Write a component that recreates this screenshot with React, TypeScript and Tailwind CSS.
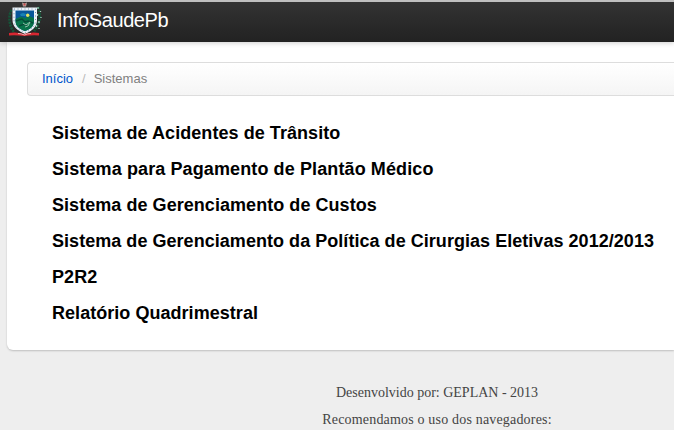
const systems = [
  { name: "Sistema de Acidentes de Trânsito", tracking: "tracking-[0.06px]" },
  { name: "Sistema para Pagamento de Plantão Médico", tracking: "tracking-[0.11px]" },
  { name: "Sistema de Gerenciamento de Custos", tracking: "tracking-[0.05px]" },
  { name: "Sistema de Gerenciamento da Política de Cirurgias Eletivas 2012/2013", tracking: "tracking-[0.04px]" },
  { name: "P2R2", tracking: "tracking-[0.06px]" },
  { name: "Relatório Quadrimestral", tracking: "tracking-[0.04px]" },
];

function Crest() {
  return (
    <svg width="34" height="36" viewBox="0 0 34 36" aria-hidden="true">
      <g fill="none" stroke="#14573a" strokeDasharray="2 1">
        <path d="M3.500 8C0 14 1 24 6 30" strokeWidth="2.500" />
        <path d="M30 5C33 13 32 22 26 29" strokeWidth="3" />
      </g>
      <path d="M30 5v2M32.500 9v1M29.500 12v2M33 15v1M31 19v2M28.500 23v2M31 26v1" stroke="#a5cdbb" strokeWidth="1.300" />
      <path d="M4.500 5.500H29V18c0 7-5 11-12 14C10 29 4.500 25 4.500 18Z" fill="#edf3f8" />
      <path d="M6 7h21.500v11c0 6-4 10-10.500 12.500C10.500 28 6 24.500 6 18Z" fill="none" stroke="#7799b2" strokeWidth="1" strokeDasharray="1 2.500" />
      <path d="M7.500 8.500h18.500v10c0 5.500-3 8.500-9 10.500-6-2-9.500-5-9.500-10.500Z" fill="#07579a" />
      <path d="M12 12l3-1 3 1-1 2h-4Z" fill="#1682b4" />
      <path d="M7.500 17l5.500-2.500 4 1.500 4-2 5 2v3c0 5-3 8-9 10-6-2-9.500-5-9.500-10Z" fill="#08734a" />
      <path d="M8 19l6-2 3 3 3-1 5 2M11 24l5-2 4 3" fill="none" stroke="#064b38" strokeWidth="1.500" />
      <path d="M15 21l3 2 4-3-2 4-3 1" fill="none" stroke="#8cc2a7" strokeWidth="1" />
      <circle cx="19.700" cy="13.200" r="1.700" fill="#e5e45d" />
      <path d="M14 0.500l2.500 1 2.500-1-1 4h-3Z" fill="#b9a6a2" />
      <path d="M15.500 1.500h2v2h-2Z" fill="#c94848" />
      <path d="M1 31q7-1.500 15 1 8-2.500 15-1v2.500q-7-.5-14.500.5-8-1-15.500-.5Z" fill="#d72731" />
      <path d="M10 31.500q3 0 6.500 1.500 3-1.500 6.500-1.500" fill="none" stroke="#edaaab" strokeWidth="1" />
    </svg>
  );
}

export default function App() {
  return (
    <div className="flex h-[430px] w-[674px] flex-col overflow-hidden bg-[#eeeeee] font-['Liberation_Sans',Arial,sans-serif]">
      <header className="z-10 flex h-[42px] shrink-0 items-start border-t-2 border-t-[#bfbfbf] bg-linear-to-b from-[#333333] to-[#222222] pl-2 shadow-[0_1px_5px_rgba(0,0,0,0.2)]">
        <Crest />
        <span className="ml-[15px] mt-[3px] text-[20px] leading-[30px] tracking-[-0.4px] text-white">InfoSaudePb</span>
      </header>
      <main className="ml-[7px] h-[308px] shrink-0 rounded-bl-[6px] bg-white pl-5 pt-5 shadow-[0_1px_2px_rgba(0,0,0,0.2)]">
        <nav className="flex h-[34px] items-center rounded-l-[4px] border border-r-0 border-[#dddddd] bg-linear-to-b from-white to-[#f5f5f5] pl-[14px] text-[13px]">
          <a className="text-[#0055cc]">Início</a>
          <span className="pl-[9px] pr-[8px] text-[#bbbbbb]">/</span>
          <span className="text-[#808080]">Sistemas</span>
        </nav>
        <ul className="ml-[25px] mt-[19px] text-[18px] font-bold leading-9 text-black">
          {systems.map((system) => (
            <li key={system.name} className={`whitespace-nowrap ${system.tracking}`}>{system.name}</li>
          ))}
        </ul>
      </main>
      <footer className="ml-[200px] w-[474px] pt-[29px] text-center font-['Palatino','Palatino_Linotype','Liberation_Serif',serif] text-[14px] leading-[27px] text-[#444444]">
        <p>Desenvolvido por: GEPLAN - 2013</p>
        <p className="tracking-[0.18px]">Recomendamos o uso dos navegadores:</p>
      </footer>
    </div>
  );
}
